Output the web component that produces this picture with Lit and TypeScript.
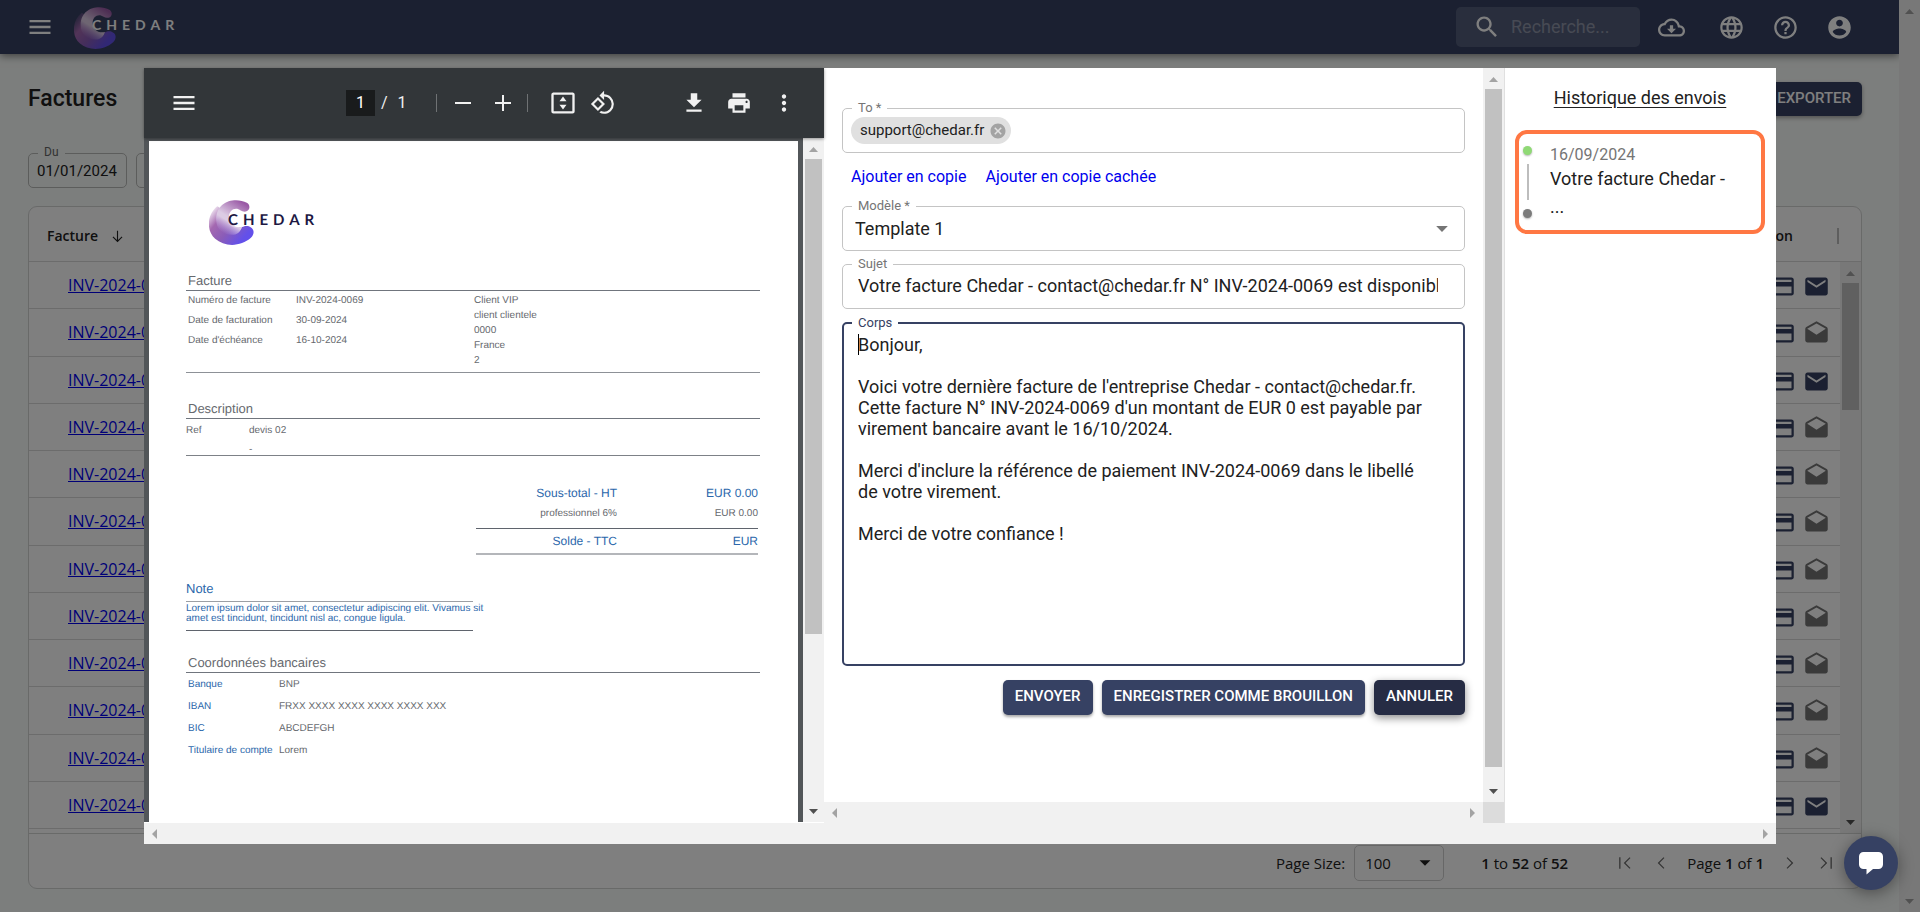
import { LitElement, html, css, svg } from "lit";
import { customElement, property } from "lit/decorators.js";
import { classMap } from "lit/directives/class-map.js";

const ICONS: Record<string, string> = {
  menu: "M3 18h18v-2H3v2zm0-5h18v-2H3v2zm0-7v2h18V6H3z",
  search:
    "M15.5 14h-.79l-.28-.27C15.41 12.59 16 11.11 16 9.5 16 5.91 13.09 3 9.5 3S3 5.91 3 9.5 5.91 16 9.5 16c1.61 0 3.09-.59 4.23-1.57l.27.28v.79l5 4.99L20.49 19l-4.99-5zm-6 0C7.01 14 5 11.99 5 9.5S7.01 5 9.5 5 14 7.01 14 9.5 11.99 14 9.5 14z",
  cloud:
    "M19.35 10.04C18.67 6.59 15.64 4 12 4 9.11 4 6.6 5.64 5.35 8.04 2.34 8.36 0 10.91 0 14c0 3.31 2.69 6 6 6h13c2.76 0 5-2.24 5-5 0-2.64-2.05-4.78-4.65-4.96zM19 18H6c-2.21 0-4-1.79-4-4 0-2.05 1.53-3.76 3.56-3.97l1.07-.11.5-.95C8.08 7.14 9.94 6 12 6c2.62 0 4.88 1.86 5.39 4.43l.3 1.5 1.53.11c1.56.1 2.78 1.41 2.78 2.96 0 1.65-1.35 3-3 3zm-5.55-8h-2.9v3H8l4 4 4-4h-2.55z",
  globe:
    "M11.99 2C6.47 2 2 6.48 2 12s4.47 10 9.99 10C17.52 22 22 17.52 22 12S17.52 2 11.99 2zm6.93 6h-2.95c-.32-1.25-.78-2.45-1.38-3.56 1.84.63 3.37 1.91 4.33 3.56zM12 4.04c.83 1.2 1.48 2.53 1.91 3.96h-3.82c.43-1.43 1.08-2.76 1.91-3.96zM4.26 14C4.1 13.36 4 12.69 4 12s.1-1.36.26-2h3.38c-.08.66-.14 1.32-.14 2s.06 1.34.14 2H4.26zm.82 2h2.95c.32 1.25.78 2.45 1.38 3.56-1.84-.63-3.37-1.9-4.33-3.56zm2.95-8H5.08c.96-1.66 2.49-2.93 4.33-3.56C8.81 5.55 8.35 6.75 8.03 8zM12 19.96c-.83-1.2-1.48-2.53-1.91-3.96h3.82c-.43 1.43-1.08 2.76-1.91 3.96zM14.34 14H9.66c-.09-.66-.16-1.32-.16-2s.07-1.35.16-2h4.68c.09.65.16 1.32.16 2s-.07 1.34-.16 2zm.25 5.56c.6-1.11 1.06-2.31 1.38-3.56h2.95c-.96 1.65-2.49 2.93-4.33 3.56zM16.36 14c.08-.66.14-1.32.14-2s-.06-1.34-.14-2h3.38c.16.64.26 1.31.26 2s-.1 1.36-.26 2h-3.38z",
  help: "M11 18h2v-2h-2v2zm1-16C6.48 2 2 6.48 2 12s4.48 10 10 10 10-4.48 10-10S17.52 2 12 2zm0 18c-4.41 0-8-3.59-8-8s3.59-8 8-8 8 3.59 8 8-3.59 8-8 8zm0-14c-2.21 0-4 1.79-4 4h2c0-1.1.9-2 2-2s2 .9 2 2c0 2-3 1.75-3 5h2c0-2.25 3-2.5 3-5 0-2.21-1.79-4-4-4z",
  account:
    "M12 2C6.48 2 2 6.48 2 12s4.48 10 10 10 10-4.48 10-10S17.52 2 12 2zm0 3c1.66 0 3 1.34 3 3s-1.34 3-3 3-3-1.34-3-3 1.34-3 3-3zm0 14.2c-2.5 0-4.71-1.28-6-3.22.03-1.99 4-3.08 6-3.08 1.99 0 5.97 1.09 6 3.08-1.29 1.94-3.5 3.22-6 3.22z",
  card: "M20 4H4c-1.11 0-1.99.89-1.99 2L2 18c0 1.11.89 2 2 2h16c1.11 0 2-.89 2-2V6c0-1.11-.89-2-2-2zm0 14H4v-6h16v6zm0-10H4V6h16v2z",
  mail: "M20 4H4c-1.1 0-1.99.9-1.99 2L2 18c0 1.1.9 2 2 2h16c1.1 0 2-.9 2-2V6c0-1.1-.9-2-2-2zm0 4l-8 5-8-5V6l8 5 8-5v2z",
  draft:
    "M21.99 8c0-.72-.37-1.35-.94-1.7L12 1 2.95 6.3C2.38 6.65 2 7.28 2 8v10c0 1.1.9 2 2 2h16c1.1 0 2-.9 2-2l-.01-10zM12 13L3.74 7.84 12 3l8.26 4.84L12 13z",
  minus: "M4 11h16v2H4z",
  plus: "M11 4h2v7h7v2h-7v7h-2v-7H4v-2h7z",
  fit: "M3.500 3h17A1.800 1.800 0 0 1 22 4.800v14.400A1.800 1.800 0 0 1 20.200 21H3.800A1.800 1.800 0 0 1 2 19.200V4.800A1.800 1.800 0 0 1 3.500 3zM4 5v14h16V5zM12 6.500l3 4H9zM12 17.500l3-4H9z",
  rotate:
    "M7.340 6.410L.860 12.900l6.490 6.480 6.490-6.480-6.500-6.490zM3.690 12.900l3.660-3.660L11 12.900l-3.660 3.660-3.650-3.660zm15.670-6.260C17.610 4.880 15.300 4 13 4V.760L8.760 5 13 9.240V6c1.790 0 3.580.680 4.950 2.050a7.007 7.007 0 0 1 0 9.900 6.973 6.973 0 0 1-7.790 1.440l-1.490 1.490C10.020 21.620 11.510 22 13 22c2.300 0 4.610-.880 6.360-2.640a8.980 8.980 0 0 0 0-12.720z",
  download: "M19 9h-4V3H9v6H5l7 7 7-7zM5 18v2h14v-2H5z",
  print:
    "M19 8H5c-1.660 0-3 1.340-3 3v6h4v4h12v-4h4v-6c0-1.660-1.340-3-3-3zm-3 11H8v-5h8v5zm3-7c-.550 0-1-.450-1-1s.450-1 1-1 1 .450 1 1-.450 1-1 1zm-1-9H6v4h12V3z",
  dots: "M12 8c1.100 0 2-.900 2-2s-.900-2-2-2-2 .900-2 2 .900 2 2 2zm0 2c-1.100 0-2 .900-2 2s.900 2 2 2 2-.900 2-2-.900-2-2-2zm0 6c-1.100 0-2 .900-2 2s.900 2 2 2 2-.900 2-2-.900-2-2-2z",
  cancel:
    "M12 2C6.470 2 2 6.470 2 12s4.470 10 10 10 10-4.470 10-10S17.530 2 12 2zm5 13.590L15.590 17 12 13.410 8.410 17 7 15.590 10.590 12 7 8.410 8.410 7 12 10.590 15.590 7 17 8.410 13.410 12 17 15.590z",
  caret: "M7 9.500l5 5 5-5z",
  sort: "M11.200 4h1.600v13l5.100-5.100L19 13l-7 7-7-7 1.100-1.100 5.100 5.100z",
  first: "M5 5h1.600v14H5zM17.500 5l1.100 1.100-5.900 5.900 5.900 5.900-1.100 1.100-7-7z",
  prev: "M15 5l1.100 1.100-5.900 5.900 5.900 5.900L15 19l-7-7z",
  next: "M9 5L7.900 6.100l5.900 5.900-5.900 5.900L9 19l7-7z",
  last: "M17.400 5H19v14h-1.600zM6.500 5L5.400 6.100l5.900 5.900-5.900 5.900L6.500 19l7-7z",
};

const icon = (name: string, size = 27) => html`
  <svg width=${size} height=${size} viewBox="0 0 24 24" fill="currentColor" aria-hidden="true">
    <path fill-rule="evenodd" d=${ICONS[name]}></path>
  </svg>
`;

@customElement("scroll-strip")
class ScrollStrip extends LitElement {
  @property({ type: Boolean, reflect: true }) horizontal = false;
  @property({ type: Number }) thumb = 0;
  @property({ type: Boolean }) live = false;

  static styles = css`
    :host {
      display: flex;
      flex-direction: column;
      justify-content: space-between;
      width: 21px;
      background: #f1f1f1;
    }
    :host([horizontal]) {
      flex-direction: row;
      width: auto;
      height: 21px;
    }
    .cap {
      flex: none;
      width: 21px;
      height: 21px;
      fill: #a3a3a3;
    }
    .cap.dark {
      fill: #505050;
    }
    .track {
      flex: 1;
      padding: 0 2px;
    }
    .thumb {
      background: #c1c1c1;
    }
  `;

  render() {
    const start = this.horizontal ? "13,6 13,16 8,11" : "6,14 15,14 10.5,9";
    const end = this.horizontal ? "8,6 8,16 13,11" : "6,8 15,8 10.5,13";
    return html`
      <svg class="cap"><polygon points=${start}></polygon></svg>
      <div class="track">
        ${this.thumb ? html`<div class="thumb" style="height:${this.thumb}%"></div>` : ""}
      </div>
      <svg class=${classMap({ cap: true, dark: this.live })}><polygon points=${end}></polygon></svg>
    `;
  }
}

@customElement("brand-logo")
class BrandLogo extends LitElement {
  @property({ type: Boolean, reflect: true }) light = false;

  static styles = css`
    :host {
      display: flex;
      align-items: center;
      color: #1d1843;
    }
    :host([light]) {
      color: #fff;
    }
    .mark {
      flex: none;
    }
    .word {
      margin: -6px 0 0 -26px;
      font: 700 15px/20px Lato, sans-serif;
      letter-spacing: 5px;
    }
    :host([light]) .word {
      margin-left: -24px;
      font-size: 14px;
    }
  `;

  render() {
    const size = this.light ? 42 : 45;
    return html`
      <svg class="mark" width=${size} height=${size} viewBox="0 0 44 44">
        <defs>
          <linearGradient id="outer" gradientUnits="userSpaceOnUse" x1="3" y1="6" x2="38" y2="36">
            <stop offset="0" stop-color="#a468b0" stop-opacity="0"></stop>
            <stop offset="0.3" stop-color="#a468b0"></stop>
            <stop offset="0.6" stop-color="#8a5cb8"></stop>
            <stop offset="0.95" stop-color="#6350ea"></stop>
          </linearGradient>
          <linearGradient id="inner" gradientUnits="userSpaceOnUse" x1="37" y1="5" x2="18" y2="35">
            <stop offset="0" stop-color="#9a5aa6"></stop>
            <stop offset="0.55" stop-color="#dccbe4"></stop>
            <stop offset="0.65" stop-color="#dccbe4"></stop>
            <stop offset="1" stop-color="#b9a0e4" stop-opacity="0"></stop>
          </linearGradient>
        </defs>
        ${svg`
          <path fill="url(#outer)" d="M8 6C-2 14-3 30 6 38C15 46 31 46 41 37C44 34 44.500 30 42 27.500C39 24.500 35 25 32.500 26.500C28 28.500 20 27 18 20C16 12 12 8 8 6Z"></path>
          <path fill="url(#inner)" d="M37 2.800C27-3 7 0 7 19C7 28 13 34.500 24 34C29 33.500 31 30 32.500 26.200C25 28 19.500 23 19.500 17C19.500 9.500 26 6.500 31 10.300C34 12.300 38.500 11.500 39.400 8C39.800 5.800 39 4 37 2.800Z"></path>
        `}
      </svg>
      <span class="word">CHEDAR</span>
    `;
  }
}

@customElement("invoice-viewer")
class InvoiceViewer extends LitElement {
  static styles = css`
    :host {
      display: flex;
      flex-direction: column;
      background: #525659;
      font-family: "Liberation Sans", Arial, sans-serif;
    }
    .toolbar {
      display: flex;
      align-items: center;
      height: 70px;
      padding: 0 27px 0 26px;
      box-sizing: border-box;
      background: #323639;
      color: #f1f1f1;
      font: 16px/26px Roboto, sans-serif;
      box-shadow: 0 1px 3px rgba(0, 0, 0, 0.4);
      position: relative;
    }
    .group {
      display: flex;
      align-items: center;
    }
    .pages {
      margin-left: 148px;
    }
    .actions {
      margin-left: auto;
      gap: 19px;
    }
    button {
      display: flex;
      padding: 0;
      border: 0;
      background: none;
      color: inherit;
    }
    .number {
      width: 29px;
      height: 26px;
      margin-right: 6px;
      padding: 0;
      border: 0;
      background: #191b1c;
      color: #fff;
      font: inherit;
      text-align: center;
    }
    .total {
      margin-left: 10px;
    }
    .rule {
      width: 1px;
      height: 18px;
      background: #6f7274;
    }
    .rule.a {
      margin: 0 14px 0 29px;
    }
    .rule.b {
      margin: 0 21px 0 12px;
    }
    .zooms {
      gap: 16px;
    }
    .fits {
      gap: 13px;
    }
    .body {
      flex: 1;
      display: flex;
      min-height: 0;
    }
    .sheet {
      flex: 1;
      margin: 3px 5px 0;
      padding: 59px 38px 0 37px;
      background: #fff;
      color: #66696e;
      font-size: 10px;
      line-height: 12px;
      text-rendering: geometricPrecision;
      overflow: hidden;
    }
    brand-logo {
      margin: 0 0 26px 23px;
    }
    h3 {
      margin: 0;
      padding-left: 2px;
      border-bottom: 1px solid #70757d;
      font-size: 13px;
      font-weight: 400;
      line-height: 19px;
    }
    .facts {
      display: grid;
      grid-template-columns: 108px 178px 1fr;
      height: 81px;
      padding-left: 2px;
      border-bottom: 1px solid #8d9197;
    }
    .list {
      margin: 0;
      padding: 0;
      list-style: none;
      line-height: 20px;
    }
    .client {
      padding-top: 2px;
      line-height: 15px;
    }
    .desc {
      margin-top: 26px;
    }
    .lines {
      display: grid;
      grid-template-columns: 63px 1fr;
      height: 34px;
      padding-top: 2px;
      border-bottom: 1px solid #7d8187;
      line-height: 19px;
    }
    .sum {
      width: 282px;
      margin: 26px 2px 0 auto;
      border-spacing: 0;
      text-align: right;
    }
    .sum th,
    .sum td {
      padding: 0 0 4px;
      font-weight: 400;
      line-height: 20px;
    }
    .sum th {
      width: 141px;
    }
    .sum .big > * {
      padding: 0;
      color: #2b67ab;
      font-size: 12px;
      line-height: 22px;
    }
    .sum .total-row > * {
      border-top: 1px solid #5f646d;
      border-bottom: 2px solid #b4b6ba;
      line-height: 24px;
    }
    .blue {
      color: #2b67ab;
    }
    .note {
      width: 287px;
      margin-top: 24px;
    }
    .note h3 {
      padding: 0 0 3px;
      border-color: #9c9fa4;
    }
    .note p {
      margin: 0;
      padding: 2px 0 6px;
      border-bottom: 1px solid #5f646d;
      line-height: 10px;
      white-space: nowrap;
    }
    .bank-title {
      margin-top: 22px;
    }
    .bank {
      display: grid;
      grid-template-columns: 91px 1fr;
      margin: 0;
      padding: 1px 0 0 2px;
      line-height: 22px;
    }
    .bank dd {
      margin: 0;
    }
  `;

  render() {
    return html`
      <div class="toolbar">
        <button aria-label="Menu">${icon("menu", 28)}</button>
        <div class="group pages">
          <input class="number" aria-label="Numéro de page" value="1" />
          <span>/</span><span class="total">1</span>
          <span class="rule a"></span>
          <div class="group zooms">
            <button aria-label="Zoom arrière">${icon("minus", 24)}</button>
            <button aria-label="Zoom avant">${icon("plus", 24)}</button>
          </div>
          <span class="rule b"></span>
          <div class="group fits">
            <button aria-label="Ajuster">${icon("fit", 28)}</button>
            <button aria-label="Pivoter">${icon("rotate", 26)}</button>
          </div>
        </div>
        <div class="group actions">
          <button aria-label="Télécharger">${icon("download", 26)}</button>
          <button aria-label="Imprimer">${icon("print", 26)}</button>
          <button aria-label="Plus">${icon("dots", 26)}</button>
        </div>
      </div>
      <div class="body">
        <article class="sheet">
          <brand-logo></brand-logo>
          <h3>Facture</h3>
          <div class="facts">
            <ul class="list">
              <li>Numéro de facture</li>
              <li>Date de facturation</li>
              <li>Date d'échéance</li>
            </ul>
            <ul class="list">
              <li>INV-2024-0069</li>
              <li>30-09-2024</li>
              <li>16-10-2024</li>
            </ul>
            <ul class="list client">
              <li>Client VIP</li>
              <li>client clientele</li>
              <li>0000</li>
              <li>France</li>
              <li>2</li>
            </ul>
          </div>
          <h3 class="desc">Description</h3>
          <div class="lines">
            <span>Ref</span>
            <span>devis 02<br />-</span>
          </div>
          <table class="sum">
            <tr class="big"><th>Sous-total - HT</th><td>EUR 0.00</td></tr>
            <tr><th>professionnel 6%</th><td>EUR 0.00</td></tr>
            <tr class="big total-row"><th>Solde - TTC</th><td>EUR</td></tr>
          </table>
          <section class="note blue">
            <h3>Note</h3>
            <p>
              Lorem ipsum dolor sit amet, consectetur adipiscing elit. Vivamus sit<br />amet est
              tincidunt, tincidunt nisl ac, congue ligula.
            </p>
          </section>
          <h3 class="bank-title">Coordonnées bancaires</h3>
          <dl class="bank">
            <dt class="blue">Banque</dt><dd>BNP</dd>
            <dt class="blue">IBAN</dt><dd>FRXX XXXX XXXX XXXX XXXX XXX</dd>
            <dt class="blue">BIC</dt><dd>ABCDEFGH</dd>
            <dt class="blue">Titulaire de compte</dt><dd>Lorem</dd>
          </dl>
        </article>
        <scroll-strip live .thumb=${74}></scroll-strip>
      </div>
    `;
  }
}

const SUBJECT = "Votre facture Chedar - contact@chedar.fr N° INV-2024-0069 est disponible";
const BODY = `Bonjour,

Voici votre dernière facture de l'entreprise Chedar - contact@chedar.fr.
Cette facture N° INV-2024-0069 d'un montant de EUR 0 est payable par virement bancaire avant le 16/10/2024.

Merci d'inclure la référence de paiement INV-2024-0069 dans le libellé de votre virement.

Merci de votre confiance !`;

@customElement("mail-form")
class MailForm extends LitElement {
  static styles = css`
    :host {
      display: grid;
      grid-template-columns: 1fr 21px;
      grid-template-rows: 1fr 21px;
      background: #fff;
      color: #212121;
      font: 18px/21px Roboto, sans-serif;
    }
    .corner {
      background: #dcdcdc;
    }
    form {
      padding: 40px 18px 0;
    }
    .field {
      position: relative;
      display: flex;
      align-items: center;
      height: 45px;
      box-sizing: border-box;
      margin-bottom: 13px;
      border: 1px solid #c4c4c4;
      border-radius: 5px;
    }
    .label {
      position: absolute;
      top: -9px;
      left: 9px;
      padding: 0 6px;
      background: #fff;
      color: #757575;
      font-size: 13px;
      line-height: 16px;
    }
    .chip {
      display: flex;
      align-items: center;
      gap: 5px;
      height: 27px;
      margin-left: 8px;
      padding: 0 4px 0 9px;
      border-radius: 14px;
      background: #e0e0e0;
      font-size: 15px;
    }
    .chip button {
      display: flex;
      padding: 0;
      border: 0;
      background: none;
      color: #a3a3a3;
    }
    .links {
      display: flex;
      gap: 19px;
      margin-bottom: 19px;
      padding: 0 9px;
      font-size: 16px;
    }
    a {
      color: #0000ee;
      text-decoration: none;
    }
    input,
    select,
    textarea {
      flex: 1;
      width: 100%;
      min-width: 0;
      margin: 0;
      padding: 0;
      box-sizing: border-box;
      border: 0;
      outline: 0;
      background: none;
      appearance: none;
      color: inherit;
      font: inherit;
    }
    select {
      padding: 0 12px;
    }
    .clip {
      flex: 1;
      min-width: 0;
      display: flex;
      padding: 0 26px 2px 15px;
    }
    .caret {
      position: absolute;
      right: 8px;
      display: flex;
      color: #757575;
      pointer-events: none;
    }
    .area {
      height: 344px;
      margin-bottom: 14px;
      border: 2px solid #364163;
    }
    .area .label {
      left: 8px;
      color: #364163;
    }
    textarea {
      align-self: stretch;
      padding: 10px 26px 10px 14px;
      resize: none;
      overflow: hidden;
    }
    .cursor {
      position: absolute;
      top: 10px;
      left: 14px;
      width: 1px;
      height: 21px;
      background: #000;
    }
    .buttons {
      display: flex;
      justify-content: flex-end;
      gap: 9px;
    }
    .buttons button {
      height: 35px;
      padding: 0 12px 3px;
      border: 0;
      border-radius: 5px;
      background: #364163;
      color: #fff;
      font: 500 15px/20px Roboto, sans-serif;
      box-shadow: 0 2px 3px rgba(0, 0, 0, 0.35);
    }
    .buttons .active {
      background: #262c44;
      box-shadow: 0 3px 8px rgba(0, 0, 0, 0.45);
    }
  `;

  render() {
    return html`
      <form>
        <div class="field">
          <label class="label" for="to">To *</label>
          <span class="chip">
            support@chedar.fr
            <button type="button" aria-label="Retirer">${icon("cancel", 18)}</button>
          </span>
          <input id="to" />
        </div>
        <div class="links">
          <a href="#cc">Ajouter en copie</a>
          <a href="#bcc">Ajouter en copie cachée</a>
        </div>
        <div class="field">
          <label class="label" for="model">Modèle *</label>
          <select id="model"><option>Template 1</option></select>
          <span class="caret">${icon("caret", 28)}</span>
        </div>
        <div class="field">
          <label class="label" for="subject">Sujet</label>
          <div class="clip"><input id="subject" .value=${SUBJECT} /></div>
        </div>
        <div class="field area">
          <label class="label" for="body">Corps</label>
          <textarea id="body" .value=${BODY}></textarea>
          <span class="cursor"></span>
        </div>
        <div class="buttons">
          <button type="button">ENVOYER</button>
          <button type="button">ENREGISTRER COMME BROUILLON</button>
          <button type="button" class="active">ANNULER</button>
        </div>
      </form>
      <scroll-strip live .thumb=${98}></scroll-strip>
      <scroll-strip horizontal></scroll-strip>
      <div class="corner"></div>
    `;
  }
}

@customElement("send-history")
class SendHistory extends LitElement {
  static styles = css`
    :host {
      display: block;
      padding: 18px 11px 0 10px;
      border-left: 1px solid #e0e0e0;
      background: #fff;
      color: #212121;
      font: 18px/24px Roboto, sans-serif;
    }
    h2 {
      margin: 0 0 20px;
      font: inherit;
      text-align: center;
      text-decoration: underline;
      text-underline-offset: 3px;
    }
    .entry {
      display: flex;
      gap: 18px;
      height: 104px;
      box-sizing: border-box;
      padding: 10px 20px 0 4px;
      border: 4px solid #ff7743;
      border-radius: 12px;
    }
    .rail {
      display: flex;
      flex-direction: column;
      align-items: center;
      gap: 9px;
      width: 9px;
      padding-top: 2px;
    }
    .dot {
      width: 9px;
      height: 9px;
      border-radius: 50%;
      background: #8fd975;
      box-shadow: 0 1px 2px rgba(0, 0, 0, 0.3);
    }
    .dot.end {
      background: #7b7b7b;
    }
    .bar {
      width: 2px;
      height: 36px;
      background: #bdbdbd;
    }
    time {
      display: block;
      color: #757575;
      font-size: 16px;
      line-height: 21px;
    }
    p {
      margin: 0;
      line-height: 28px;
    }
  `;

  render() {
    return html`
      <h2>Historique des envois</h2>
      <div class="entry">
        <div class="rail">
          <span class="dot"></span><span class="bar"></span><span class="dot end"></span>
        </div>
        <div>
          <time>16/09/2024</time>
          <p>Votre facture Chedar -<br />...</p>
        </div>
      </div>
    `;
  }
}

const SENT = [true, false, true, false, false, false, false, false, false, false, false, true];

@customElement("app-root")
class AppRoot extends LitElement {
  static styles = css`
    :host {
      position: relative;
      display: flex;
      height: 100vh;
      overflow: hidden;
      background: #f9fcfa;
      color: #212121;
      font: 16px/20px Roboto, sans-serif;
    }
    button {
      display: flex;
      padding: 0;
      border: 0;
      background: none;
      color: inherit;
      font: inherit;
    }
    .page {
      flex: 1;
      min-width: 0;
      display: flex;
      flex-direction: column;
    }
    header {
      flex: none;
      display: flex;
      align-items: center;
      height: 54px;
      padding: 0 46px 0 26px;
      box-sizing: border-box;
      background: #364163;
      color: #fff;
      box-shadow: 0 2px 8px rgba(0, 0, 0, 0.5);
    }
    header brand-logo {
      margin: 2px auto 0 20px;
    }
    .search {
      display: flex;
      align-items: center;
      gap: 10px;
      width: 184px;
      height: 40px;
      box-sizing: border-box;
      margin-right: 18px;
      padding-left: 17px;
      border-radius: 5px;
      background: rgba(255, 255, 255, 0.15);
    }
    .search input {
      flex: 1;
      min-width: 0;
      padding: 0;
      border: 0;
      background: none;
      color: #fff;
      font: 18px/24px Roboto, sans-serif;
    }
    .search input::placeholder {
      color: #8f95a8;
      opacity: 1;
    }
    .tools {
      display: flex;
      gap: 27px;
    }
    .tools > :first-child {
      margin-right: 6px;
    }
    main {
      flex: 1;
      min-height: 0;
      display: flex;
      flex-direction: column;
      padding: 28px 37px 23px 28px;
    }
    .title {
      display: flex;
      justify-content: space-between;
      align-items: center;
      height: 34px;
      margin-bottom: 37px;
    }
    h1 {
      margin: 0;
      font-size: 23px;
      font-weight: 500;
      line-height: 34px;
    }
    .export {
      align-items: center;
      height: 34px;
      padding: 0 11px 2px;
      border-radius: 5px;
      background: #364163;
      color: #fff;
      font-weight: 500;
      font-size: 15px;
      box-shadow: 0 2px 4px rgba(0, 0, 0, 0.35);
    }
    .filters {
      display: flex;
      gap: 9px;
      margin-bottom: 18px;
    }
    .date {
      position: relative;
      width: 99px;
      height: 35px;
    }
    .date input {
      width: 100%;
      height: 100%;
      box-sizing: border-box;
      padding: 0 8px;
      border: 1px solid #b8bbb9;
      border-radius: 5px;
      background: none;
      color: #212121;
      font: 15px/20px Roboto, sans-serif;
    }
    .date label {
      position: absolute;
      top: -9px;
      left: 10px;
      padding: 0 6px;
      background: #f9fcfa;
      color: #666;
      font-size: 12px;
      line-height: 16px;
    }
    .card {
      flex: 1;
      min-height: 0;
      display: flex;
      flex-direction: column;
      border: 1px solid #d2d4d3;
      border-radius: 9px;
      background: #fff;
      font-family: "Open Sans", "Noto Sans", sans-serif;
      overflow: hidden;
    }
    .grid {
      flex: 1;
      min-height: 0;
      display: flex;
      overflow: hidden;
      border-bottom: 1px solid #d2d4d3;
    }
    table {
      flex: 1;
      height: 622px;
      border-spacing: 0;
    }
    th,
    td {
      padding: 0;
      border-bottom: 1px solid #d8d8d8;
    }
    th {
      height: 54px;
      font-size: 14px;
      font-weight: 600;
      text-align: left;
    }
    .head {
      display: flex;
      align-items: center;
      gap: 11px;
      padding: 4px 0 0 18px;
    }
    .head.last {
      justify-content: flex-end;
      gap: 44px;
      padding-right: 1px;
    }
    .tick {
      width: 2px;
      height: 16px;
      background: #bcbcbc;
    }
    td a {
      padding-left: 39px;
      color: #0000ee;
      font-size: 16px;
    }
    .acts {
      display: flex;
      justify-content: flex-end;
      gap: 7px;
      padding: 3px 10px 0 0;
      color: #364163;
    }
    .acts svg {
      display: block;
    }
    .acts .off {
      color: #757575;
    }
    .side {
      display: flex;
      flex-direction: column;
    }
    .side::before {
      content: "";
      height: 54px;
      border-bottom: 1px solid #d8d8d8;
    }
    .side scroll-strip {
      flex: 1;
    }
    .pager {
      flex: none;
      display: flex;
      align-items: center;
      justify-content: flex-end;
      height: 54px;
      padding: 3px 25px 0 0;
      box-sizing: border-box;
      font-size: 15px;
    }
    .pager strong {
      font-weight: 600;
    }
    .pager label {
      margin-right: 9px;
    }
    .size {
      position: relative;
      display: flex;
      align-items: center;
      margin-right: 37px;
    }
    .size select {
      width: 90px;
      height: 36px;
      padding: 0 10px;
      border: 1px solid #cfcfcf;
      border-radius: 5px;
      background: none;
      appearance: none;
      color: inherit;
      font: inherit;
    }
    .size svg {
      position: absolute;
      right: 6px;
      pointer-events: none;
    }
    .nav {
      display: flex;
      align-items: center;
      gap: 16px;
      margin-left: 47px;
    }
    .nav button {
      color: #6b6b6b;
    }
    .overlay {
      position: absolute;
      inset: 0;
      padding: 68px 144px;
      background: rgba(0, 0, 0, 0.5);
    }
    .dialog {
      display: flex;
      flex-direction: column;
      height: 100%;
      background: #fff;
    }
    .panes {
      flex: 1;
      min-height: 0;
      display: grid;
      grid-template-columns: 680fr 680fr 272fr;
    }
    invoice-viewer {
      margin-bottom: 1px;
    }
    .chat {
      position: absolute;
      right: 22px;
      bottom: 22px;
      align-items: center;
      justify-content: center;
      width: 54px;
      height: 54px;
      border-radius: 50%;
      background: #364163;
      color: #fff;
      box-shadow: 0 3px 16px rgba(0, 0, 0, 0.4);
    }
  `;

  render() {
    return html`
      <div class="page">
        <header>
          <button aria-label="Menu">${icon("menu", 28)}</button>
          <brand-logo light></brand-logo>
          <label class="search">
            ${icon("search", 28)}
            <input type="search" aria-label="Recherche" placeholder="Recherche..." />
          </label>
          <div class="tools">
            ${["cloud", "globe", "help", "account"].map(
              (name) => html`<button aria-label=${name}>${icon(name)}</button>`,
            )}
          </div>
        </header>
        <main>
          <div class="title">
            <h1>Factures</h1>
            <button class="export">EXPORTER</button>
          </div>
          <div class="filters">
            <div class="date">
              <label for="from">Du</label>
              <input id="from" value="01/01/2024" />
            </div>
            <div class="date">
              <label for="until">Au</label>
              <input id="until" value="31/12/2024" />
            </div>
          </div>
          <section class="card">
            <div class="grid">
              <table>
                <thead>
                  <tr>
                    <th><div class="head">Facture ${icon("sort", 17)}</div></th>
                    <th><div class="head last">Action <span class="tick"></span></div></th>
                  </tr>
                </thead>
                <tbody>
                  ${SENT.map(
                    (sent, i) => html`
                      <tr>
                        <td><a href="#invoice">INV-2024-00${69 - i}</a></td>
                        <td>
                          <div class="acts">
                            ${icon("card")}
                            <span class=${classMap({ off: !sent })}>${icon(sent ? "mail" : "draft")}</span>
                          </div>
                        </td>
                      </tr>
                    `,
                  )}
                </tbody>
              </table>
              <div class="side"><scroll-strip live .thumb=${24}></scroll-strip></div>
            </div>
            <div class="pager">
              <label for="size">Page Size:</label>
              <span class="size">
                <select id="size"><option>100</option></select>
                ${icon("caret", 26)}
              </span>
              <span><strong>1</strong> to <strong>52</strong> of <strong>52</strong></span>
              <div class="nav">
                <button aria-label="Première page">${icon("first", 20)}</button>
                <button aria-label="Page précédente">${icon("prev", 20)}</button>
                <span>Page <strong>1</strong> of <strong>1</strong></span>
                <button aria-label="Page suivante">${icon("next", 20)}</button>
                <button aria-label="Dernière page">${icon("last", 20)}</button>
              </div>
            </div>
          </section>
        </main>
      </div>
      <scroll-strip></scroll-strip>

      <div class="overlay">
        <div class="dialog" role="dialog" aria-label="Envoyer la facture">
          <div class="panes">
            <invoice-viewer></invoice-viewer>
            <mail-form></mail-form>
            <send-history></send-history>
          </div>
          <scroll-strip horizontal></scroll-strip>
        </div>
      </div>

      <button class="chat" aria-label="Ouvrir la messagerie">
        <svg width="26" height="26" viewBox="0 0 26 26" fill="currentColor">
          <path
            d="M5.500 2h15A4.500 4.500 0 0 1 25 6.500v8a4.500 4.500 0 0 1-4.500 4.500H15l-6.500 5.500V19h-3A4.500 4.500 0 0 1 1 14.500v-8A4.500 4.500 0 0 1 5.500 2z"
          ></path>
        </svg>
      </button>
    `;
  }
}
